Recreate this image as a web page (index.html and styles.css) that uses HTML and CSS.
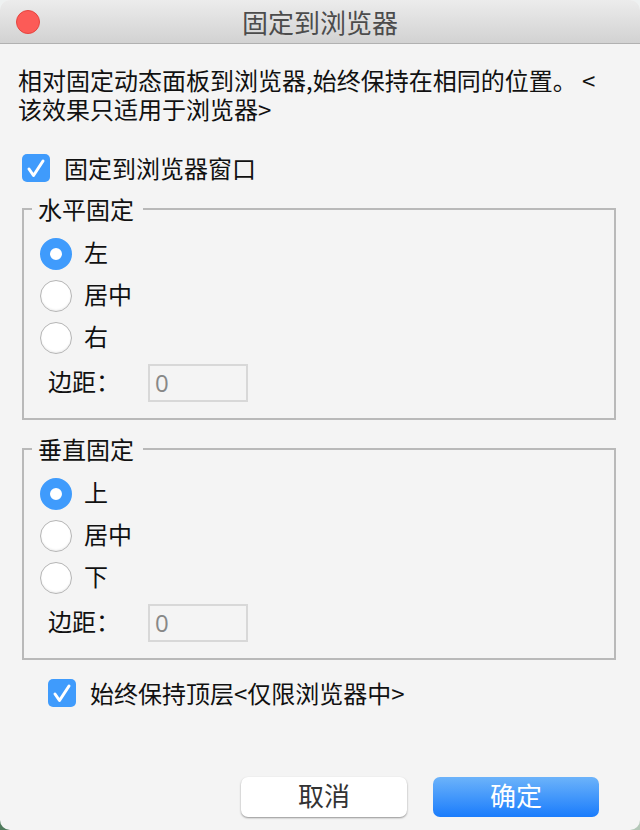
FILE: index.html
```html
<!DOCTYPE html>
<html>
<head>
	<title>固定到浏览器</title>
	<link rel="stylesheet" href="styles.css">
</head>
<body>
	<div class="window">
		<div class="titlebar">
			<span class="close"></span>
			<span class="title">固定到浏览器</span>
		</div>

		<div class="content">
			<p class="desc">相对固定动态面板到浏览器,始终保持在相同的位置。 &lt;<br>该效果只适用于浏览器&gt;</p>

			<label class="check check-main">
				<span class="box"><svg viewBox="0 0 28 28"><path d="M7 15l4.5 6.5L21 7"/></svg></span>
				固定到浏览器窗口
			</label>

			<fieldset class="group">
				<legend>水平固定</legend>
				<div class="radio"><span class="dot on"></span>左</div>
				<div class="radio"><span class="dot"></span>居中</div>
				<div class="radio"><span class="dot"></span>右</div>
				<div class="margin-row">
					<span class="margin-label">边距：</span>
					<span class="input">0</span>
				</div>
			</fieldset>

			<fieldset class="group group-v">
				<legend>垂直固定</legend>
				<div class="radio"><span class="dot on"></span>上</div>
				<div class="radio"><span class="dot"></span>居中</div>
				<div class="radio"><span class="dot"></span>下</div>
				<div class="margin-row">
					<span class="margin-label">边距：</span>
					<span class="input">0</span>
				</div>
			</fieldset>

			<label class="check check-top">
				<span class="box"><svg viewBox="0 0 28 28"><path d="M7 15l4.5 6.5L21 7"/></svg></span>
				始终保持顶层&lt;仅限浏览器中&gt;
			</label>
		</div>

		<div class="buttons">
			<div class="btn">取消</div>
			<div class="btn btn-ok">确定</div>
		</div>
	</div>
</body>
</html>
```

FILE: styles.css
```css
html, body {
	margin: 0;
	height: 100%;
}
body {
	width: 640px;
	height: 830px;
	overflow: hidden;
	/* desktop showing through the window's rounded corners */
	background: linear-gradient(#eef1f1 50%, transparent 50%), linear-gradient(to right, #4f7a5c, #b4c8b8);
	font-family: "Noto Sans CJK SC", "Liberation Sans", sans-serif;
	font-weight: 400;
	color: #111;
}
.window {
	width: 640px;
	height: 830px;
	background: #f4f4f4;
	border-radius: 10px;
	overflow: hidden;
	display: flex;
	flex-direction: column;
}

.titlebar {
	position: relative;
	height: 43px;
	flex: none;
	display: flex;
	align-items: center;
	justify-content: center;
	background: linear-gradient(#ececec, #d2d2d2);
	border-bottom: 1px solid #b1b1b1;
}
.close {
	position: absolute;
	left: 16px;
	top: 10px;
	width: 24px;
	height: 24px;
	box-sizing: border-box;
	border-radius: 50%;
	background: #fc5b57;
	border: 1px solid #e5453f;
}
.title {
	font-size: 26px;
	line-height: 43px;
	color: #4c4c4c;
}

.content {
	flex: 1;
	padding: 0 22px 0 22px;
}
.desc {
	margin: 21px 0 0 -4px;
	font-size: 24px;
	line-height: 29px;
}

.check {
	display: flex;
	align-items: center;
	font-size: 24px;
	line-height: 30px;
}
.check-main {
	margin-top: 30px;
}
.check-top {
	margin: 18px 0 0 26px;
}
.box {
	width: 28px;
	height: 28px;
	margin-right: 14px;
	border-radius: 5px;
	background: #3f9bfc;
	flex: none;
}
.box svg {
	display: block;
	width: 28px;
	height: 28px;
}
.box path {
	fill: none;
	stroke: #fff;
	stroke-width: 3;
	stroke-linecap: round;
	stroke-linejoin: round;
}

.group {
	box-sizing: border-box;
	width: 594px;
	height: 226px;
	margin: 11px 0 0 0;
	padding: 6px 0 0 16px;
	border: 2px solid #b9b9b9;
}
.group-v {
	margin-top: 14px;
}
.group legend {
	margin-left: -8px;
	padding: 0 9px 0 6px;
	font-size: 24px;
	line-height: 30px;
}

.radio {
	display: flex;
	align-items: center;
	height: 42px;
	font-size: 24px;
}
.dot {
	box-sizing: border-box;
	width: 32px;
	height: 32px;
	margin-top: 6px;
	margin-right: 12px;
	border-radius: 50%;
	background: #fff;
	border: 1px solid #b5b5b5;
	box-shadow: inset 0 -1px 2px rgba(0, 0, 0, .08);
	flex: none;
}
.dot.on {
	border: 10px solid #3f9bfc;
	box-shadow: none;
}

.margin-row {
	display: flex;
	align-items: center;
	margin: 7px 0 0 8px;
	font-size: 24px;
}
.margin-label {
	width: 100px;
	margin-bottom: 4px;
}
.input {
	box-sizing: border-box;
	width: 100px;
	height: 38px;
	padding-left: 5px;
	border: 2px solid #d8d8d8;
	color: #888;
	line-height: 34px;
	font-family: "Open Sans", sans-serif;
}

.buttons {
	flex: none;
	display: flex;
	justify-content: flex-end;
	gap: 26px;
	padding: 0 41px 13px 0;
}
.btn {
	box-sizing: border-box;
	width: 166px;
	height: 40px;
	border-radius: 7px;
	background: #fff;
	box-shadow: 0 1px 2px rgba(0, 0, 0, .4);
	text-align: center;
	font-size: 26px;
	line-height: 36px;
	color: #333;
}
.btn-ok {
	background: linear-gradient(#6cb3fa, #1a7cfc);
	box-shadow: none;
	color: #fff;
}
```
